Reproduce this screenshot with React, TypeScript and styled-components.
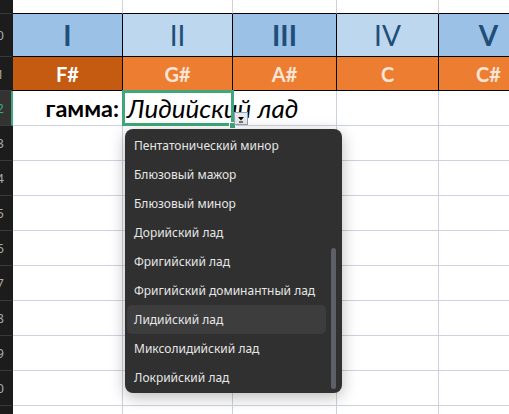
import React from "react";
import styled, { createGlobalStyle } from "styled-components";

const GRID = "#cdd2de";
const GREEN = "#3fa77a";

const GlobalStyle = createGlobalStyle`
  html, body {
    margin: 0;
    padding: 0;
    background: #fff;
    overflow: hidden;
  }
`;

const Page = styled.div`
  width: 509px;
  height: 414px;
  overflow: hidden;
  background: #fff;
`;

const Sheet = styled.div`
  display: grid;
  grid-template-columns: 13px 110px 110px 104px 102px 100px;
  grid-template-rows: 14px 43px 34px repeat(10, 35px);
  width: max-content;
`;

const RowHead = styled.div<{ $active?: boolean }>`
  box-sizing: border-box;
  display: flex;
  align-items: center;
  justify-content: flex-end;
  padding-right: 7px;
  overflow: hidden;
  background: ${(p) => (p.$active ? "#333333" : "#1c1c1c")};
  color: ${(p) => (p.$active ? GREEN : "#a8a8a8")};
  border-bottom: 1px solid #3a3a3a;
  border-right: 2px solid ${(p) => (p.$active ? GREEN : "#1c1c1c")};
  font: 13px "Noto Sans", sans-serif;
  white-space: nowrap;
`;

const Cell = styled.div<{ $bg?: string; $edge?: string; $bottom?: string; $justify?: string }>`
  box-sizing: border-box;
  position: relative;
  display: flex;
  align-items: center;
  justify-content: ${(p) => p.$justify ?? "center"};
  background: ${(p) => p.$bg ?? "transparent"};
  border-right: 1px solid ${(p) => p.$edge ?? GRID};
  border-bottom: 1px solid ${(p) => p.$bottom ?? p.$edge ?? GRID};
  white-space: nowrap;
`;

const Numeral = styled.span<{ $bold?: boolean }>`
  font-family: Lato, "Open Sans", sans-serif;
  font-size: 28px;
  font-weight: ${(p) => (p.$bold ? 700 : 400)};
  color: #1f4e79;
  line-height: 1;
`;

const Note = styled.span<{ $white?: boolean }>`
  font-family: Lato, "Open Sans", sans-serif;
  font-size: 20px;
  font-weight: 700;
  color: ${(p) => (p.$white ? "#ffffff" : "#fce4d6")};
  line-height: 1;
`;

const Label = styled.span`
  font-family: Lato, "Open Sans", sans-serif;
  font-size: 23.5px;
  font-weight: 700;
  color: #000;
  padding-right: 3px;
`;

const EditText = styled.span`
  position: relative;
  z-index: 1;
  margin-left: 4px;
  font-family: Lato, "Open Sans", sans-serif;
  font-size: 26px;
  font-style: italic;
  color: #000;
`;

const SelectFrame = styled.div`
  position: absolute;
  left: -1px;
  top: -1px;
  right: -2px;
  bottom: -1px;
  border: 3px solid ${GREEN};
  z-index: 2;
  pointer-events: none;
`;

const FillHandle = styled.div`
  position: absolute;
  right: -4px;
  bottom: -4px;
  width: 5px;
  height: 5px;
  background: ${GREEN};
  border: 1px solid #fff;
  z-index: 3;
`;

const DropButton = styled.div`
  position: absolute;
  left: calc(100% + 2px);
  bottom: 0;
  box-sizing: border-box;
  width: 14px;
  height: 13px;
  background: #e9e9e9;
  border: 1px solid #8fa0bd;
  display: flex;
  align-items: center;
  justify-content: center;
  z-index: 3;
`;

const Menu = styled.div`
  position: absolute;
  left: 2px;
  top: calc(100% + 4px);
  width: 217px;
  height: 264px;
  box-sizing: border-box;
  display: flex;
  background: #303030;
  border-radius: 8px;
  box-shadow: 0 4px 16px rgba(0, 0, 0, 0.28);
  z-index: 5;
  overflow: hidden;
`;

const List = styled.div`
  flex: 1;
  display: flex;
  flex-direction: column;
  padding: 2px 0 0 2px;
`;

const Item = styled.div<{ $active?: boolean }>`
  height: 29px;
  flex-shrink: 0;
  display: flex;
  align-items: center;
  padding-left: 7px;
  border-radius: 5px;
  background: ${(p) => (p.$active ? "#3d3d3d" : "transparent")};
  color: #e6e6e6;
  font: 12px "Noto Sans", sans-serif;
  white-space: nowrap;
`;

const Track = styled.div`
  width: 16px;
  flex-shrink: 0;
  padding: 119px 0 0 5px;
  box-sizing: border-box;
`;

const Thumb = styled.div`
  width: 5px;
  height: 141px;
  border-radius: 3px;
  background: #5d6066;
`;

const numerals = [
  { t: "I", bold: true, bg: "#9bc2e6" },
  { t: "II", bold: false, bg: "#bdd7ee" },
  { t: "III", bold: true, bg: "#9bc2e6" },
  { t: "IV", bold: false, bg: "#bdd7ee" },
  { t: "V", bold: true, bg: "#9bc2e6" },
];

const notes = [
  { t: "F#", bg: "#c55a11", white: true },
  { t: "G#", bg: "#ed7d31" },
  { t: "A#", bg: "#ed7d31" },
  { t: "C", bg: "#ed7d31" },
  { t: "C#", bg: "#ed7d31" },
];

const scales = [
  "Пентатонический минор",
  "Блюзовый мажор",
  "Блюзовый минор",
  "Дорийский лад",
  "Фригийский лад",
  "Фригийский доминантный лад",
  "Лидийский лад",
  "Миксолидийский лад",
  "Локрийский лад",
];

const Arrow = () => (
  <svg width="8" height="8" viewBox="0 0 8 8">
    <polygon points="1,2 7,2 4,5.5" fill="#000" />
    <rect x="2" y="6.5" width="4" height="1" fill="#000" />
  </svg>
);

const blankRows = [13, 14, 15, 16, 17, 18, 19, 20, 21, 22];

export default function App() {
  return (
    <Page>
      <GlobalStyle />
      <Sheet>
        <RowHead />
        {[0, 1, 2, 3, 4].map((i) => (
          <Cell key={`r9-${i}`} $bottom="#000" />
        ))}

        <RowHead>10</RowHead>
        {numerals.map((n) => (
          <Cell key={n.t} $bg={n.bg} $edge="#000">
            <Numeral $bold={n.bold}>{n.t}</Numeral>
          </Cell>
        ))}

        <RowHead>11</RowHead>
        {notes.map((n) => (
          <Cell key={n.t} $bg={n.bg} $edge="#000">
            <Note $white={n.white}>{n.t}</Note>
          </Cell>
        ))}

        <RowHead $active>12</RowHead>
        <Cell $justify="flex-end">
          <Label>гамма:</Label>
        </Cell>
        <Cell $justify="flex-start" style={{ zIndex: 4 }}>
          <EditText>Лидийский лад</EditText>
          <SelectFrame />
          <FillHandle />
          <DropButton>
            <Arrow />
          </DropButton>
          <Menu>
            <List>
              {scales.map((s) => (
                <Item key={s} $active={s === "Лидийский лад"}>
                  {s}
                </Item>
              ))}
            </List>
            <Track>
              <Thumb />
            </Track>
          </Menu>
        </Cell>
        <Cell />
        <Cell />
        <Cell />

        {blankRows.map((r) => (
          <React.Fragment key={r}>
            <RowHead>{r}</RowHead>
            {[0, 1, 2, 3, 4].map((i) => (
              <Cell key={i} />
            ))}
          </React.Fragment>
        ))}
      </Sheet>
    </Page>
  );
}
